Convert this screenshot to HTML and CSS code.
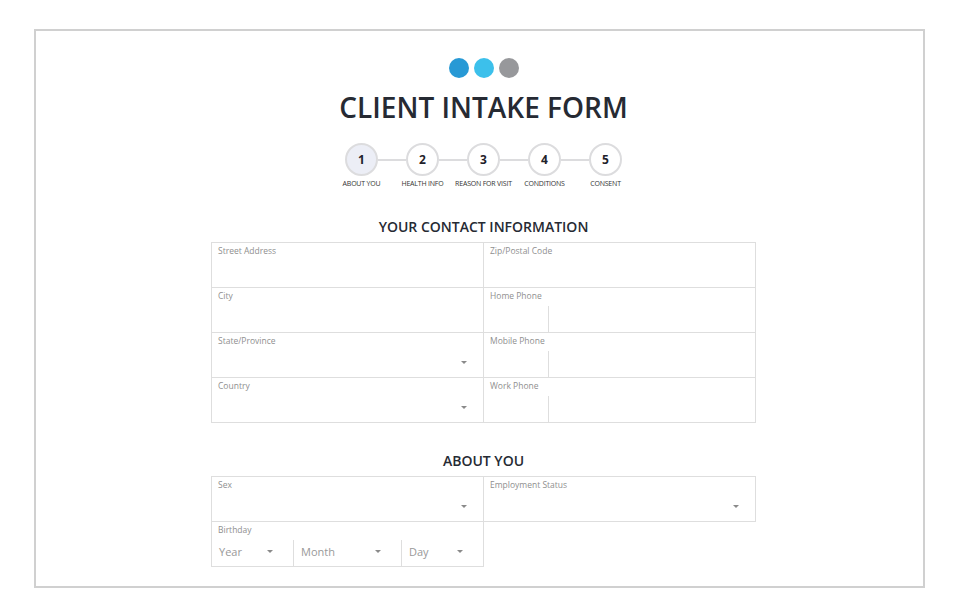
FILE: index.html
```html
<!DOCTYPE html>
<html lang="en">
<head>
  <meta charset="UTF-8">
  <meta name="viewport" content="width=device-width, initial-scale=1.0">
  <title>Client Intake Form</title>
  <link rel="stylesheet" href="styles.css">
</head>
<body>
  <div class="frame">
    <div class="logo">
      <span class="dot dot-blue"></span>
      <span class="dot dot-cyan"></span>
      <span class="dot dot-gray"></span>
    </div>
    <h1 class="title">CLIENT INTAKE FORM</h1>

    <!-- Progress steps -->
    <div class="steps">
      <div class="step active">1</div>
      <div class="step-line"></div>
      <div class="step">2</div>
      <div class="step-line"></div>
      <div class="step">3</div>
      <div class="step-line"></div>
      <div class="step">4</div>
      <div class="step-line"></div>
      <div class="step">5</div>
    </div>
    <div class="step-labels">
      <span>ABOUT YOU</span>
      <span>HEALTH INFO</span>
      <span>REASON FOR VISIT</span>
      <span>CONDITIONS</span>
      <span>CONSENT</span>
    </div>

    <!-- Contact -->
    <h2 class="section-title">YOUR CONTACT INFORMATION</h2>
    <div class="form-grid">
      <div class="field">
        <label>Street Address</label>
      </div>
      <div class="field">
        <label>Zip/Postal Code</label>
      </div>
      <div class="field">
        <label>City</label>
      </div>
      <div class="field phone">
        <label>Home Phone</label>
        <div class="phone-row"><div class="phone-code"></div></div>
      </div>
      <div class="field select">
        <label>State/Province</label>
        <div class="select-row"><span class="arrow"></span></div>
      </div>
      <div class="field phone">
        <label>Mobile Phone</label>
        <div class="phone-row"><div class="phone-code"></div></div>
      </div>
      <div class="field select">
        <label>Country</label>
        <div class="select-row"><span class="arrow"></span></div>
      </div>
      <div class="field phone">
        <label>Work Phone</label>
        <div class="phone-row"><div class="phone-code"></div></div>
      </div>
    </div>

    <!-- About -->
    <h2 class="section-title about">ABOUT YOU</h2>
    <div class="form-grid">
      <div class="field select">
        <label>Sex</label>
        <div class="select-row"><span class="arrow"></span></div>
      </div>
      <div class="field select">
        <label>Employment Status</label>
        <div class="select-row"><span class="arrow"></span></div>
      </div>
      <div class="field birthday">
        <label>Birthday</label>
        <div class="date-row">
          <div class="date-part year"><span>Year</span><span class="arrow"></span></div>
          <div class="date-part month"><span>Month</span><span class="arrow"></span></div>
          <div class="date-part day"><span>Day</span><span class="arrow"></span></div>
        </div>
      </div>
    </div>
  </div>
</body>
</html>
```

FILE: styles.css
```css
body {
  margin: 0;
  background: #ffffff;
  font-family: "Open Sans", "Noto Sans", sans-serif;
  color: #2b2f3a;
}

.frame {
  box-sizing: border-box;
  width: 891px;
  height: 559px;
  margin: 29px 0 0 34px;
  border: 2px solid #d0d0d0;
  padding: 27px 0 0 8px;
  display: flex;
  flex-direction: column;
  align-items: center;
}

.logo {
  display: flex;
  gap: 5px;
  height: 20px;
}

.dot {
  width: 20px;
  height: 20px;
  border-radius: 50%;
}

.dot-blue { background: #2799d5; }
.dot-cyan { background: #3cc0eb; }
.dot-gray { background: #97989b; }

.title {
  margin: 9px 0 0;
  font-size: 28px;
  line-height: 40px;
  font-weight: 600;
  color: #262a33;
}

.steps {
  display: flex;
  align-items: center;
  margin-top: 16px;
}

.step {
  box-sizing: border-box;
  width: 33px;
  height: 33px;
  border: 2px solid #dcdcde;
  border-radius: 50%;
  display: flex;
  justify-content: center;
  align-items: center;
  font-size: 12px;
  font-weight: 700;
  color: #1f222a;
  background: #fff;
}

.step.active {
  background: #eceef6;
}

.step-line {
  width: 28px;
  height: 2px;
  background: #dcdcde;
}

.step-labels {
  display: flex;
  margin-top: 3px;
}

.step-labels span {
  width: 61px;
  text-align: center;
  white-space: nowrap;
  font-size: 7px;
  line-height: 10px;
  color: #333;
  letter-spacing: -0.2px;
}

.section-title {
  margin: 28px 0 0;
  font-size: 14px;
  line-height: 20px;
  font-weight: 600;
  color: #262a33;
}

.section-title.about {
  margin-top: 28px;
}

.form-grid {
  margin-top: 5px;
  width: 545px;
  display: grid;
  grid-template-columns: 272px 272px;
  border-top: 1px solid #dedede;
  border-left: 1px solid #dedede;
  box-sizing: border-box;
}

.field {
  box-sizing: border-box;
  height: 45px;
  border-right: 1px solid #dedede;
  border-bottom: 1px solid #dedede;
  display: flex;
  flex-direction: column;
}

.field label {
  display: block;
  padding: 2px 6px 0;
  font-size: 8.5px;
  line-height: 12px;
  color: #8f8f8f;
}

.select-row {
  flex: 1;
  display: flex;
  justify-content: flex-end;
  align-items: flex-end;
  padding: 0 16px 13px 0;
}

.arrow {
  width: 0;
  height: 0;
  border-left: 3.5px solid transparent;
  border-right: 3.5px solid transparent;
  border-top: 3.5px solid #8a8a8a;
}

.phone-row {
  flex: 1;
  display: flex;
  margin-top: 4px;
}

.phone-code {
  width: 64px;
  border-right: 1px solid #dedede;
}

.date-row {
  flex: 1;
  display: flex;
  margin-top: 4px;
}

.date-part {
  display: flex;
  justify-content: space-between;
  align-items: center;
  padding: 0 20px 3px 7px;
  font-size: 11px;
  color: #999;
}

.date-part + .date-part {
  border-left: 1px solid #dedede;
}

.year { width: 81px; box-sizing: border-box; }
.month { width: 108px; box-sizing: border-box; }
.day { flex: 1; }
```
